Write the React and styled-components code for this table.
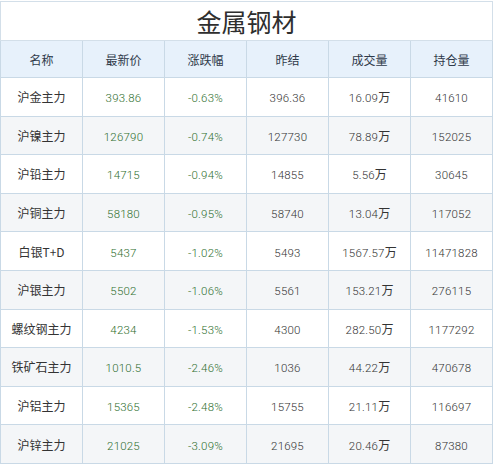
import styled, { createGlobalStyle } from 'styled-components'

const GlobalStyle = createGlobalStyle`
html, body {
  margin: 0;
  padding: 0;
  background: #fff;
}
`

const Wrapper = styled.div`
padding: 1px 0 0 0;
width: 499px;
`

const Table = styled.table`
width: 493px;
border-collapse: collapse;
table-layout: fixed;
font-family: "Noto Sans CJK SC", sans-serif;
font-size: 12px;
color: #3a3a3a;
`

const TitleCell = styled.th`
height: 38px;
padding: 0;
border: 1px solid #d3dfe9;
font-size: 25px;
font-weight: 400;
color: #2e2e2e;
text-align: center;
`

const HeadCell = styled.th`
height: 36px;
padding: 0;
border: 1px solid #c9d9e6;
background: #e7f1fb;
font-weight: 400;
color: #2f3a4a;
text-align: center;
`

const Row = styled.tr`
background: ${(props) => (props.$alt ? '#f4f6f8' : '#ffffff')};
`

const Cell = styled.td`
height: 37.6px;
padding: 0;
border: 1px solid #c9d9e6;
text-align: center;
color: ${(props) => (props.$green ? '#2f6f2f' : '#333333')};
`

const Num = styled.span`
font-family: Roboto, sans-serif;
font-weight: 300;
font-size: 11.5px;
font-variant-numeric: tabular-nums;
letter-spacing: 0.2px;
`

const Unit = styled.span`
font-family: "Noto Sans CJK SC", sans-serif;
font-size: 12px;
`

const headers = ['名称', '最新价', '涨跌幅', '昨结', '成交量', '持仓量']

const rows = [
  ['沪金主力', '393.86', '-0.63%', '396.36', '16.09', '41610'],
  ['沪镍主力', '126790', '-0.74%', '127730', '78.89', '152025'],
  ['沪铅主力', '14715', '-0.94%', '14855', '5.56', '30645'],
  ['沪铜主力', '58180', '-0.95%', '58740', '13.04', '117052'],
  ['白银T+D', '5437', '-1.02%', '5493', '1567.57', '11471828'],
  ['沪银主力', '5502', '-1.06%', '5561', '153.21', '276115'],
  ['螺纹钢主力', '4234', '-1.53%', '4300', '282.50', '1177292'],
  ['铁矿石主力', '1010.5', '-2.46%', '1036', '44.22', '470678'],
  ['沪铝主力', '15365', '-2.48%', '15755', '21.11', '116697'],
  ['沪锌主力', '21025', '-3.09%', '21695', '20.46', '87380'],
]

const App = () => {
  return (
    <Wrapper>
      <GlobalStyle />
      <Table>
        <thead>
          <tr>
            <TitleCell colSpan={6}>金属钢材</TitleCell>
          </tr>
          <tr>
            {headers.map((h) => (
              <HeadCell key={h}>{h}</HeadCell>
            ))}
          </tr>
        </thead>
        <tbody>
          {rows.map((r, i) => (
            <Row key={r[0]} $alt={i % 2 === 1}>
              <Cell>{r[0]}</Cell>
              <Cell $green><Num>{r[1]}</Num></Cell>
              <Cell $green><Num>{r[2]}</Num></Cell>
              <Cell><Num>{r[3]}</Num></Cell>
              <Cell><Num>{r[4]}</Num><Unit>万</Unit></Cell>
              <Cell><Num>{r[5]}</Num></Cell>
            </Row>
          ))}
        </tbody>
      </Table>
    </Wrapper>
  )
}

export default App
